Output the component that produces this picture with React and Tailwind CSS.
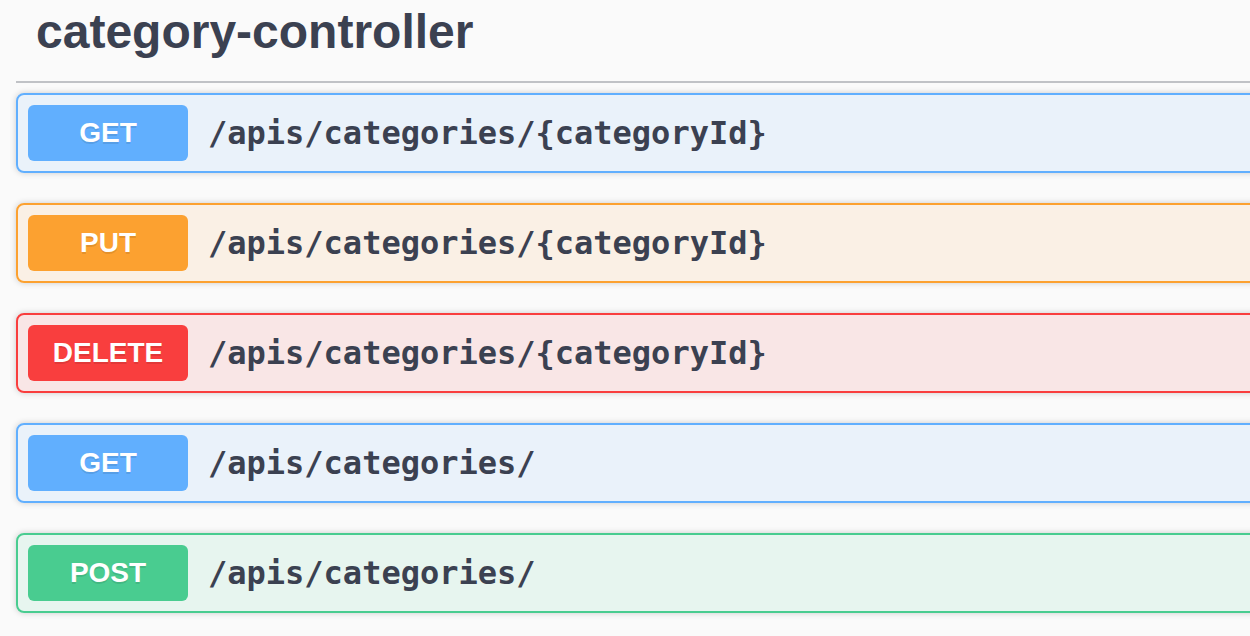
const ops = [
  { method: 'GET', path: '/apis/categories/{categoryId}', border: 'border-[#61affe]', bg: 'bg-[#61affe]/10', badge: 'bg-[#61affe]' },
  { method: 'PUT', path: '/apis/categories/{categoryId}', border: 'border-[#fca130]', bg: 'bg-[#fca130]/10', badge: 'bg-[#fca130]' },
  { method: 'DELETE', path: '/apis/categories/{categoryId}', border: 'border-[#f93e3e]', bg: 'bg-[#f93e3e]/10', badge: 'bg-[#f93e3e]' },
  { method: 'GET', path: '/apis/categories/', border: 'border-[#61affe]', bg: 'bg-[#61affe]/10', badge: 'bg-[#61affe]' },
  { method: 'POST', path: '/apis/categories/', border: 'border-[#49cc90]', bg: 'bg-[#49cc90]/10', badge: 'bg-[#49cc90]' },
]

export default function App() {
  return (
    <div className="h-[636px] w-full overflow-hidden bg-[#fafafa] text-[#3b4151]">
      <div className="w-[1400px] pl-4">
        <div className="border-b-2 border-[#3b4151]/30 pt-[8px] pb-[25px] pl-5 font-['Liberation_Sans',Arial,sans-serif] text-[48px] font-bold leading-[48px]">
          category-controller
        </div>
        <div className="mt-[10px] flex flex-col gap-[30px]">
          {ops.map((op, i) => (
            <div
              key={i}
              className={`flex items-center rounded-lg border-2 p-[10px] shadow-[0_0_6px_rgba(0,0,0,0.19)] ${op.border} ${op.bg}`}
            >
              <div
                className={`flex h-[56px] w-[160px] items-center justify-center rounded-md font-['Liberation_Sans',Arial,sans-serif] text-[28px] font-bold text-white [text-shadow:0_2px_0_rgba(0,0,0,0.1)] ${op.badge}`}
              >
                {op.method}
              </div>
              <div className="px-5 font-['DejaVu_Sans_Mono',monospace] text-[32px] font-bold">
                {op.path}
              </div>
            </div>
          ))}
        </div>
      </div>
    </div>
  )
}
